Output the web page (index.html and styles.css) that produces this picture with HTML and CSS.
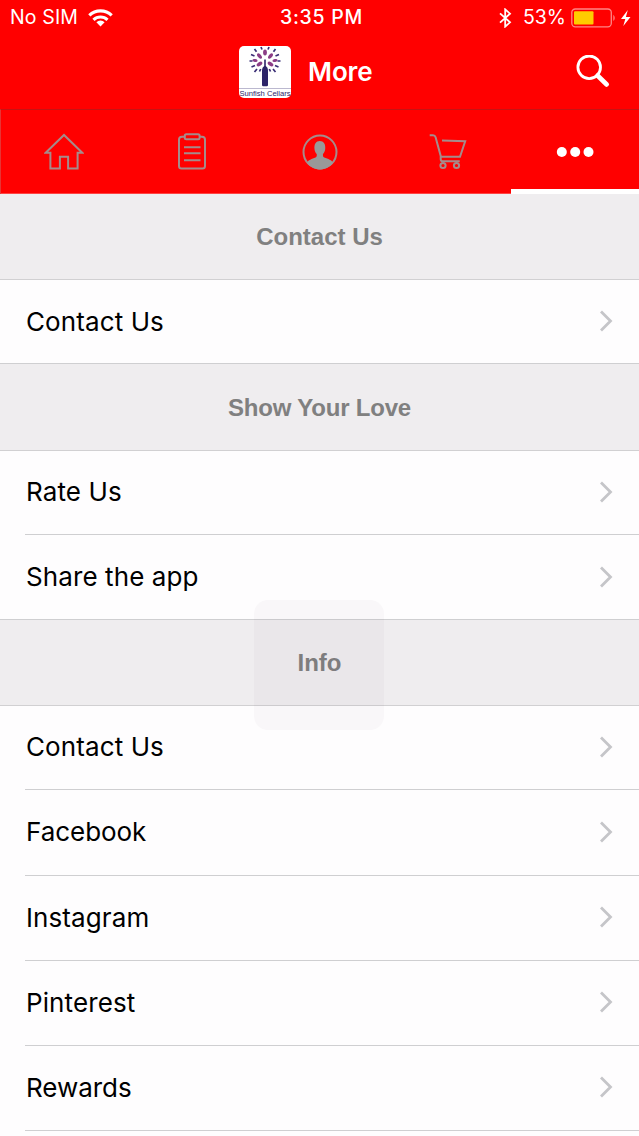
FILE: index.html
```html
<!DOCTYPE html>
<html lang="en">
<head>
<meta charset="utf-8">
<title>More</title>
<link rel="stylesheet" href="styles.css">
</head>
<body>
<div class="screen">
  <header class="header">
    <div class="status">
      <div class="status-left">
        <span>No SIM</span>
        <svg class="wifi" width="25" height="18" viewBox="0 0 25 18"><g fill="none" stroke="#fff" stroke-width="3.1"><path d="M1.3 6.4a16 16 0 0 1 22.4 0"/><path d="M5.500 10.800a10 10 0 0 1 14 0"/></g><path d="M12.500 17.500 8.400 13.300a5.800 5.800 0 0 1 8.200 0z" fill="#fff"/></svg>
      </div>
      <span class="time">3:35 PM</span>
      <div class="status-right">
        <svg class="bluetooth" width="13" height="20" viewBox="0 0 13 20"><path d="M1 5.400 11 14.300 6.200 18.600V1.400L11 5.700 1 14.600" fill="none" stroke="#fff" stroke-width="1.800"/></svg>
        <span class="percent">53%</span>
        <svg width="62" height="20" viewBox="0 0 62 20"><rect x=".8" y="1" width="39.500" height="17.800" rx="3.500" fill="none" stroke="#ff8585" stroke-width="1.300"/><rect x="3" y="3.200" width="19.500" height="13.400" rx="1" fill="#ffcc00"/><path d="M42.300 6.800a4 4 0 0 1 0 6.200z" fill="#ff8585"/><path d="M56.800 2 50 11h4.300l-2 7 7.200-9h-4.600z" fill="#fff"/></svg>
      </div>
    </div>
    <div class="navbar">
      <div class="brand">
        <svg class="logo" width="52" height="52" viewBox="0 0 52 52">
          <rect width="52" height="52" rx="5" fill="#fff"/>
          <path d="M25.200 13.500h1.600V20q2.200 1.500 2.200 4v15q0 1.200-1.300 1.200h-3.400Q23 40.200 23 39V24q0-2.500 2.200-4z" fill="#2d2469"/>
          <g fill="#8b3d86">
            <ellipse cx="26" cy="6.500" rx="1.900" ry="3"/>
            <ellipse cx="20.500" cy="10" rx="1.800" ry="3.200" transform="rotate(-38 20.500 10)"/>
            <ellipse cx="31.500" cy="10" rx="1.800" ry="3.200" transform="rotate(38 31.500 10)"/>
            <ellipse cx="20.500" cy="18" rx="1.800" ry="3.200" transform="rotate(-125 20.500 18)"/>
            <ellipse cx="31.500" cy="18" rx="1.800" ry="3.200" transform="rotate(125 31.500 18)"/>
            <ellipse cx="36" cy="14.500" rx="1.500" ry="2.600" transform="rotate(80 36 14.500)"/>
            <ellipse cx="16" cy="14.500" rx="1.500" ry="2.600" transform="rotate(-80 16 14.500)"/>
          </g>
          <path d="M22 1l1 2.500M30 1l-1 2.500M15.500 3l2 2.800M36.500 3l-2 2.800M12 8.500l3.500 1.500M40 8.500l-3.500 1.500M10.500 15h3M41.500 15h-3M12.500 21l3.500-1.500M39.500 21l-3.500-1.500M15.500 26l2.500-3M36.500 26l-2.500-3M20.500 25.500l1.200-2.500M31.500 25.500l-1.200-2.500" stroke="#3a2d75" stroke-width="1.700"/>
          <path d="M0 42.500h52" stroke="#aaa6c3" stroke-width=".8"/>
          <text class="logo-text" x=".5" y="49.500" textLength="51">Sunfish Cellars</text>
        </svg>
        <h1 class="title">More</h1>
      </div>
      <svg class="search" width="34" height="34" viewBox="0 0 34 34"><circle cx="13.200" cy="12.300" r="11.300" fill="none" stroke="#fff" stroke-width="2.800"/><path d="M21.500 20.500 30.700 29.500" stroke="#fff" stroke-width="4.600" stroke-linecap="round"/></svg>
    </div>
  </header>

  <nav class="tabs">
    <a class="tab"><svg class="home" width="40" height="40" viewBox="0 0 40 40"><path d="M1.700 20.800 20 3l18.300 17.800h-4.700v15.700h-9.500V24.800h-8.200v11.700H6.400V20.800z"/></svg></a>
    <a class="tab"><svg width="40" height="40" viewBox="0 0 40 40"><path d="M12.500 4.800H10q-3 0-3 3V34q0 2.500 2.500 2.500h21Q33 36.500 33 34V7.800q0-3-3-3h-2.500"/><rect x="12.800" y="2.200" width="14.800" height="5" rx="1.500"/><path d="M12 15.300h16.500M12 21.300h16.500M12 28.300h16.500"/></svg></a>
    <a class="tab"><svg width="40" height="40" viewBox="0 0 40 40"><circle cx="20" cy="20" r="16.500"/><path class="solid" d="M7 31c1-3 5-4 8.500-5.500 1.300-.6 1.500-2 1.200-3.500-1.300-1.300-2-3-2.200-5-.5-5 1.500-8 5.300-8s6 3 5.400 8c-.2 2-1 3.700-2.200 5-.2 1.500 0 3 1.300 3.500C28 27 32 28 33 31c-3 4-8 6.500-13 6.500S10 35 7 31z"/></svg></a>
    <a class="tab"><svg width="40" height="40" viewBox="0 0 40 40"><path d="M1.700 3.200H5q2 0 2.600 2L12.700 24v3.200q0 2.100 2 2.100h17M14 8.500l23.200.7-5.200 15.600H13"/><circle cx="15" cy="33.500" r="2.600"/><circle cx="28.500" cy="33.500" r="2.600"/></svg></a>
    <a class="tab active"><svg width="40" height="40" viewBox="0 0 40 40"><circle class="dot" cx="6.800" cy="20" r="5"/><circle class="dot" cx="20.200" cy="20" r="5"/><circle class="dot" cx="33.500" cy="20" r="5"/></svg></a>
  </nav>

  <main class="list">
    <h2 class="section">Contact Us</h2>
    <a class="row short last"><span>Contact Us</span><svg class="chevron" viewBox="0 0 14 22"><path d="M2 1.500 11.500 11 2 20.500"/></svg></a>
    <h2 class="section tall love">Show Your Love</h2>
    <a class="row short"><span>Rate Us</span><svg class="chevron" viewBox="0 0 14 22"><path d="M2 1.500 11.500 11 2 20.500"/></svg></a>
    <a class="row last"><span class="share">Share the app</span><svg class="chevron" viewBox="0 0 14 22"><path d="M2 1.500 11.500 11 2 20.500"/></svg></a>
    <h2 class="section info"><span>Info</span><i class="hud"></i></h2>
    <a class="row short"><span>Contact Us</span><svg class="chevron" viewBox="0 0 14 22"><path d="M2 1.500 11.500 11 2 20.500"/></svg></a>
    <a class="row long"><span class="tight">Facebook</span><svg class="chevron" viewBox="0 0 14 22"><path d="M2 1.500 11.500 11 2 20.500"/></svg></a>
    <a class="row"><span>Instagram</span><svg class="chevron" viewBox="0 0 14 22"><path d="M2 1.500 11.500 11 2 20.500"/></svg></a>
    <a class="row"><span>Pinterest</span><svg class="chevron" viewBox="0 0 14 22"><path d="M2 1.500 11.500 11 2 20.500"/></svg></a>
    <a class="row"><span class="tight">Rewards</span><svg class="chevron" viewBox="0 0 14 22"><path d="M2 1.500 11.500 11 2 20.500"/></svg></a>
  </main>
</div>
</body>
</html>
```
FILE: styles.css
```css
* { box-sizing: border-box; }
body { margin: 0; }
.screen {
  width: 639px;
  height: 1136px;
  overflow: hidden;
  background: #fefdfe;
  font-family: Inter, "Liberation Sans", sans-serif;
}
.header { height: 109px; background: #f00; color: #fff; }
.status {
  display: grid;
  grid-template-columns: 1fr auto 1fr;
  align-items: center;
  height: 35px;
  padding: 0 6px 0 10px;
  font-size: 19.5px;
  line-height: 35px;
}
.status-left, .status-right { display: flex; align-items: center; }
.status-left { gap: 10px; letter-spacing: .15px; }
.status-right { justify-content: flex-end; }
.time { font-weight: 500; letter-spacing: .7px; }
.percent { margin: 0 5px 0 11px; }
.navbar {
  display: grid;
  grid-template-columns: 239px 1fr auto;
  align-items: center;
  height: 74px;
  padding-right: 29px;
}
.brand { grid-column: 2; display: flex; align-items: center; gap: 17px; }
.logo-text { font: 7.6px "Liberation Sans", sans-serif; fill: #2d2469; }
.title { margin: 0; font-size: 26px; font-weight: 600; line-height: 52px; letter-spacing: -.1px; }
.tabs {
  display: grid;
  grid-template-columns: repeat(5, 1fr);
  height: 85px;
  background: #f00;
  border-top: 1px solid #c61414;
  border-left: 1px solid #e63535;
}
.tab { display: flex; align-items: center; justify-content: center; border-bottom: 1px solid #f44; }
.tab svg { fill: none; stroke: #a58b8b; stroke-width: 2; }
.tab .home { margin-right: 2px; }
.tab .solid { fill: #999; stroke: none; }
.tab .dot { fill: #fff; stroke: none; }
.tab.active { border-bottom: 5px solid #fff; padding-top: 4px; }
.section {
  position: relative;
  display: flex;
  align-items: center;
  justify-content: center;
  height: 86px;
  margin: 0;
  border-bottom: 1px solid #d1d0d2;
  background: #efedef;
  color: #808080;
  font: bold 24px "Liberation Sans", Arial, sans-serif;
}
.section.tall { height: 87px; padding-top: 1px; }
.section.love { letter-spacing: -.2px; }
.hud {
  position: absolute;
  left: 254px;
  top: -20px;
  width: 130px;
  height: 130px;
  border-radius: 14px;
  background: rgba(60, 40, 80, .028);
}
.row {
  display: flex;
  align-items: center;
  justify-content: space-between;
  height: 85px;
  margin-left: 25px;
  padding: 0 26px 2px 1px;
  border-bottom: 1px solid #cfcfd1;
  color: #000;
  font-size: 26px;
  letter-spacing: .1px;
}
.row.short { height: 84px; }
.row.long { height: 86px; }
.row.last { margin-left: 0; padding-left: 26px; padding-bottom: 1px; }
.row .tight { letter-spacing: -.05px; }
.chevron { width: 14px; height: 22px; fill: none; stroke: #c5c5c9; stroke-width: 2.8; }
```
